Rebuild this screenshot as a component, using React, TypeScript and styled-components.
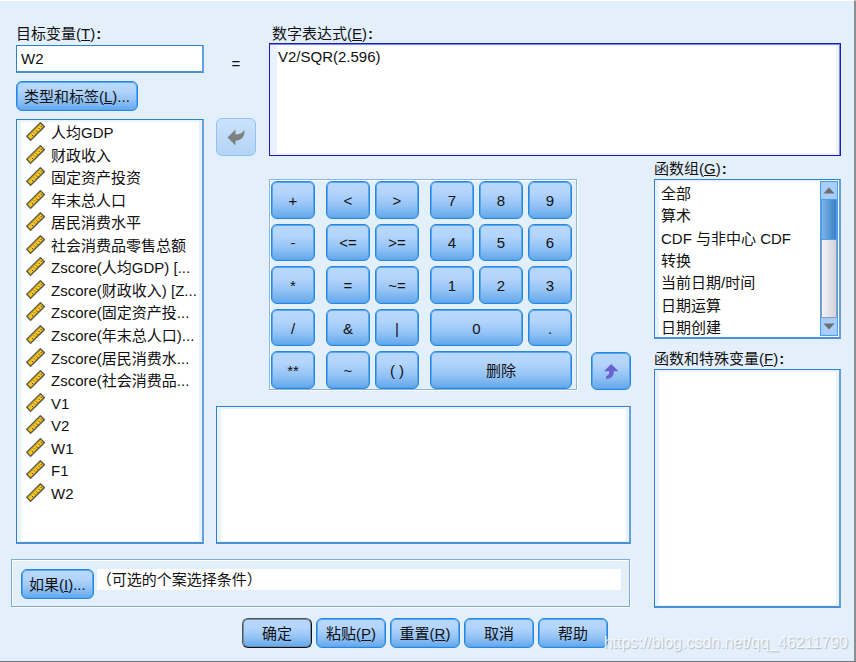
import React, { useState } from "react";
import styled, { createGlobalStyle, css } from "styled-components";

const GlobalStyle = createGlobalStyle`
  * { box-sizing: border-box; }
  body {
    margin: 0;
    background: #e3effb;
    color: #111;
    font: 15px/20px "Liberation Sans", "Noto Sans CJK SC", sans-serif;
  }
  button, input, textarea { font: inherit; color: inherit; }
  ul { list-style: none; margin: 0; padding: 0; }
`;

const Dialog = styled.main`
  position: relative;
  display: flex;
  flex-direction: column;
  gap: 10px;
  min-height: 100vh;
  padding: 23px 13px 11px 16px;
  background: #e3effb;
  border-top: 1px solid #fff;
  border-right: 2px solid #8a8f94;
  border-bottom: 1px solid #6f7478;
`;

const Body = styled.div`
  display: grid;
  grid-template-columns: 188px minmax(0, 1fr) 198px;
  grid-template-areas:
    "source expression expression"
    "source keypad functions"
    "condition condition functions";
  column-gap: 12px;
`;

const Column = styled.section<{ $area: string }>`
  grid-area: ${(p) => p.$area};
  display: flex;
  flex-direction: column;
  min-width: 0;
`;

const FieldLabel = styled.label`
  display: block;
  white-space: nowrap;
  line-height: 20px;
`;

const frame = css`
  background: #fff;
  border: 1px solid #2f7fcb;
  border-right: 2px solid #64a0dc;
  border-bottom: 2px solid #4a90d6;
`;

const TargetInput = styled.input`
  ${frame}
  width: 100%;
  height: 28px;
  margin-top: 1px;
  padding: 0 4px;
  outline: none;
`;

const glossy = css`
  background: linear-gradient(#b8d7fb 0%, #b4d5fb 30%, #94c3f5 65%, #62a7ec 100%);
  border: 1px solid #2488e0;
  border-radius: 6px;
  box-shadow: inset 0 0 0 1px #58a5ee;
`;

const PushButton = styled.button<{ $primary?: boolean }>`
  ${glossy}
  height: 30px;
  padding: 2px 7px 0;
  white-space: nowrap;
  ${(p) =>
    p.$primary &&
    css`
      border-color: #555 #111 #111 #555;
      box-shadow: inset 0 0 0 1px #6d8fb4;
    `}
`;

const TypeButton = styled(PushButton)`
  align-self: flex-start;
  margin: 8px 0;
`;

const ListFrame = styled.div`
  ${frame}
  flex: 1;
  display: flex;
  box-shadow: inset 4px 2px #e9f3fd, inset -3px -1px #e9f3fd;
`;

const SourceList = styled.ul`
  flex: 1;
  display: grid;
  grid-auto-rows: minmax(22px, 1fr);
  padding: 2px 4px 37px 9px;
  min-width: 0;
`;

const SourceItem = styled.li`
  display: flex;
  align-items: center;
  gap: 6px;
  white-space: nowrap;
  svg { flex: none; margin-bottom: 3px; }
`;

const ExpressionArea = styled.section`
  grid-area: expression;
  display: grid;
  grid-template-columns: 40px minmax(0, 1fr);
  column-gap: 13px;
`;

const Side = styled.div`
  display: flex;
  flex-direction: column;
  justify-content: space-between;
  align-items: center;
  padding-top: 30px;
`;

const ExpressionField = styled.div`
  display: flex;
  flex-direction: column;
  label { padding-left: 3px; line-height: 19px; }
`;

const ExpressionBox = styled.textarea`
  height: 113px;
  padding: 3px 8px;
  resize: none;
  outline: none;
  background: #fff;
  border: 1px solid #1c1cb4;
  box-shadow: inset 0 1px #7f8bdc, inset -1px 0 #7f8bdc, inset 7px 2px #eaf3fd, inset -4px -2px #eaf3fd;
`;

const MoveButton = styled.button`
  ${glossy}
  display: flex;
  align-items: center;
  justify-content: center;
  width: 40px;
  height: 38px;
  padding: 0;
  &:disabled {
    background: linear-gradient(#cbe2fb, #b3d4f6);
    border-color: #92c3f0;
    box-shadow: none;
  }
`;

const KeypadRow = styled.div`
  display: flex;
  justify-content: space-between;
  align-items: flex-end;
  padding: 23px 0 16px 53px;
`;

const Keypad = styled.div`
  display: flex;
  gap: 11px;
  min-height: 211px;
  padding: 0 4px 0 1px;
  border: 1px solid #8fb5de;
  box-shadow: inset 1px 1px #fff, 1px 1px #fff;
`;

const KeyGroup = styled.div<{ $columns: number }>`
  display: grid;
  grid-template-columns: repeat(${(p) => p.$columns}, 44px);
  grid-auto-rows: 1fr;
  gap: 5px;
  padding-top: 1px;
`;

const Key = styled.button<{ $span: number }>`
  ${glossy}
  grid-column: span ${(p) => p.$span};
  padding: 2px 0 0;
  text-align: center;
`;

const Description = styled.div`
  ${frame}
  height: 138px;
  box-shadow: inset 4px 2px #e9f3fd, inset -3px -1px #e9f3fd;
`;

const FunctionsColumn = styled(Column)`
  margin-left: 11px;
  padding-top: 3px;
`;

const GroupFrame = styled.div`
  ${frame}
  display: flex;
  height: 160px;
  margin-bottom: 10px;
  padding: 1px 1px 1px 4px;
  overflow: hidden;
  box-shadow: inset 4px 2px #e9f3fd;
`;

const GroupList = styled.ul`
  flex: 1;
  display: grid;
  grid-auto-rows: 1fr;
  min-height: 158px;
  padding: 2px 2px 0;
  white-space: nowrap;
  li { display: flex; align-items: center; }
`;

const ScrollBar = styled.div`
  display: flex;
  flex-direction: column;
  width: 18px;
  border: 1px solid #4d9fea;
  background: linear-gradient(90deg, #f6f6f9, #cfcfdc);
`;

const ScrollButton = styled.button`
  display: flex;
  align-items: center;
  justify-content: center;
  height: 17px;
  padding: 0;
  border: 1px solid #a0cbf7;
  background: #a9cff8;
`;

const ScrollThumb = styled.div`
  height: 41px;
  border: 1px solid #4d9fea;
  background: linear-gradient(90deg, #7db4e6, #3a80c4);
`;

const ScrollTrack = styled.div`
  flex: 1;
  border: 1px solid #9a9aa2;
  border-width: 0 1px 1px;
`;

const Condition = styled.section`
  grid-area: condition;
  display: flex;
  align-items: flex-start;
  gap: 3px;
  height: 48px;
  margin: 15px 1px 1px -5px;
  padding: 9px 8px 0 9px;
  border: 1px solid #7fabd9;
  box-shadow: inset 1px 1px #fff, 1px 1px #fff;
`;

const ConditionText = styled.output`
  flex: 1;
  background: #fff;
  line-height: 21px;
`;

const Footer = styled.footer`
  display: flex;
  justify-content: center;
  gap: 4px;
  padding-right: 7px;
  button { width: 70px; padding-left: 0; padding-right: 0; }
`;

const Watermark = styled.span`
  position: absolute;
  right: 6px;
  bottom: 8px;
  font-size: 16px;
  color: rgba(255, 255, 255, 0.8);
  text-shadow: 1px 1px 1px rgba(120, 135, 150, 0.5);
  pointer-events: none;
`;

const RulerIcon = () => (
  <svg width="19" height="19" viewBox="0 0 19 19" aria-hidden="true">
    <path d="M0.8 14.2 L14.4 0.8 L18.3 4.6 L4.6 18.2 Z" fill="#ffc81e" stroke="#5f5f45" strokeWidth="1.5" strokeLinejoin="round" />
    <path d="M2.6 14 L14.4 2.5" stroke="#c9a63a" strokeWidth="1" />
    <path d="M5.8 12.8 L7.2 14.2 M8 10.4 L9 11.4 M10.2 8.4 L11.6 9.8 M12.6 6 L13.6 7 M14.6 4 L15.6 5" stroke="#4d430f" strokeWidth="1" />
  </svg>
);

const ReturnArrow = () => (
  <svg width="20" height="18" viewBox="0 0 20 18" aria-hidden="true">
    <path d="M1.5 9.5 L9.5 1.5 V6.5 C13 6.5 16 5.5 18.5 2 C19 9 15 12.5 9.5 12.7 V17.5 Z" fill="#7e8184" />
  </svg>
);

const UpArrow = () => (
  <svg width="16" height="17" viewBox="0 0 16 17" aria-hidden="true">
    <path d="M8.2 1 L15.5 8.2 H10.8 C11 12.8 8.6 15.8 3 15.8 V13 C5.6 12.6 6.4 11.2 6.2 8.2 H1 Z" fill="#6b62d2" />
  </svg>
);

const Triangle = ({ down = false }: { down?: boolean }) => (
  <svg width="12" height="7" viewBox="0 0 12 7" aria-hidden="true">
    <path d={down ? "M0.5 0.5 H11.5 L6 6.5 Z" : "M0.5 6.5 H11.5 L6 0.5 Z"} fill="#6e6e6e" />
  </svg>
);

const Caption = ({ text, hotkey, tail }: { text: string; hotkey?: string; tail?: string }) => (
  <>
    {text}
    {hotkey && <>(<u>{hotkey}</u>)</>}
    {tail}
  </>
);

const Colon = styled.b.attrs({ children: ":" })`
  padding-left: 1px;
`;

const variables = [
  "人均GDP", "财政收入", "固定资产投资", "年末总人口", "居民消费水平", "社会消费品零售总额",
  "Zscore(人均GDP) [...", "Zscore(财政收入) [Z...", "Zscore(固定资产投...", "Zscore(年末总人口)...",
  "Zscore(居民消费水...", "Zscore(社会消费品...", "V1", "V2", "W1", "F1", "W2",
];

const functionGroups = ["全部", "算术", "CDF 与非中心 CDF", "转换", "当前日期/时间", "日期运算", "日期创建"];

const keyGroups: { columns: number; keys: [string, number?][] }[] = [
  { columns: 1, keys: [["+"], ["-"], ["*"], ["/"], ["**"]] },
  { columns: 2, keys: [["<"], [">"], ["<="], [">="], ["="], ["~="], ["&"], ["|"], ["~"], ["( )"]] },
  {
    columns: 3,
    keys: [["7"], ["8"], ["9"], ["4"], ["5"], ["6"], ["1"], ["2"], ["3"], ["0", 2], ["."], ["删除", 3]],
  },
];

export default function App() {
  const [target, setTarget] = useState("W2");
  const [expression, setExpression] = useState("V2/SQR(2.596)");

  return (
    <>
      <GlobalStyle />
      <Dialog lang="zh-CN">
        <Body>
          <Column $area="source">
            <FieldLabel htmlFor="target"><Caption text="目标变量" hotkey="T" /><Colon /></FieldLabel>
            <TargetInput id="target" value={target} onChange={(e) => setTarget(e.target.value)} />
            <TypeButton type="button"><Caption text="类型和标签" hotkey="L" tail="..." /></TypeButton>
            <ListFrame>
              <SourceList>
                {variables.map((name) => (
                  <SourceItem key={name}><RulerIcon />{name}</SourceItem>
                ))}
              </SourceList>
            </ListFrame>
          </Column>

          <ExpressionArea>
            <Side>
              <span>=</span>
              <MoveButton type="button" disabled aria-label="移入表达式"><ReturnArrow /></MoveButton>
            </Side>
            <ExpressionField>
              <FieldLabel htmlFor="expression"><Caption text="数字表达式" hotkey="E" /><Colon /></FieldLabel>
              <ExpressionBox
                id="expression"
                spellCheck={false}
                value={expression}
                onChange={(e) => setExpression(e.target.value)}
              />
            </ExpressionField>
          </ExpressionArea>

          <Column $area="keypad">
            <KeypadRow>
              <Keypad>
                {keyGroups.map((group) => (
                  <KeyGroup key={group.columns} $columns={group.columns}>
                    {group.keys.map(([label, span = 1]) => (
                      <Key key={label} type="button" $span={span}>{label}</Key>
                    ))}
                  </KeyGroup>
                ))}
              </Keypad>
              <MoveButton type="button" aria-label="插入函数"><UpArrow /></MoveButton>
            </KeypadRow>
            <Description />
          </Column>

          <FunctionsColumn $area="functions">
            <FieldLabel as="span" id="groups"><Caption text="函数组" hotkey="G" /><Colon /></FieldLabel>
            <GroupFrame>
              <GroupList aria-labelledby="groups">
                {functionGroups.map((name) => <li key={name}>{name}</li>)}
              </GroupList>
              <ScrollBar>
                <ScrollButton type="button" aria-label="向上滚动"><Triangle /></ScrollButton>
                <ScrollThumb />
                <ScrollTrack />
                <ScrollButton type="button" aria-label="向下滚动"><Triangle down /></ScrollButton>
              </ScrollBar>
            </GroupFrame>
            <FieldLabel as="span"><Caption text="函数和特殊变量" hotkey="F" /><Colon /></FieldLabel>
            <ListFrame />
          </FunctionsColumn>

          <Condition>
            <PushButton type="button"><Caption text="如果" hotkey="I" tail="..." /></PushButton>
            <ConditionText>（可选的个案选择条件）</ConditionText>
          </Condition>
        </Body>

        <Footer>
          <PushButton type="button" $primary>确定</PushButton>
          <PushButton type="button"><Caption text="粘贴" hotkey="P" /></PushButton>
          <PushButton type="button"><Caption text="重置" hotkey="R" /></PushButton>
          <PushButton type="button">取消</PushButton>
          <PushButton type="button">帮助</PushButton>
        </Footer>
        <Watermark>https://blog.csdn.net/qq_46211790</Watermark>
      </Dialog>
    </>
  );
}
